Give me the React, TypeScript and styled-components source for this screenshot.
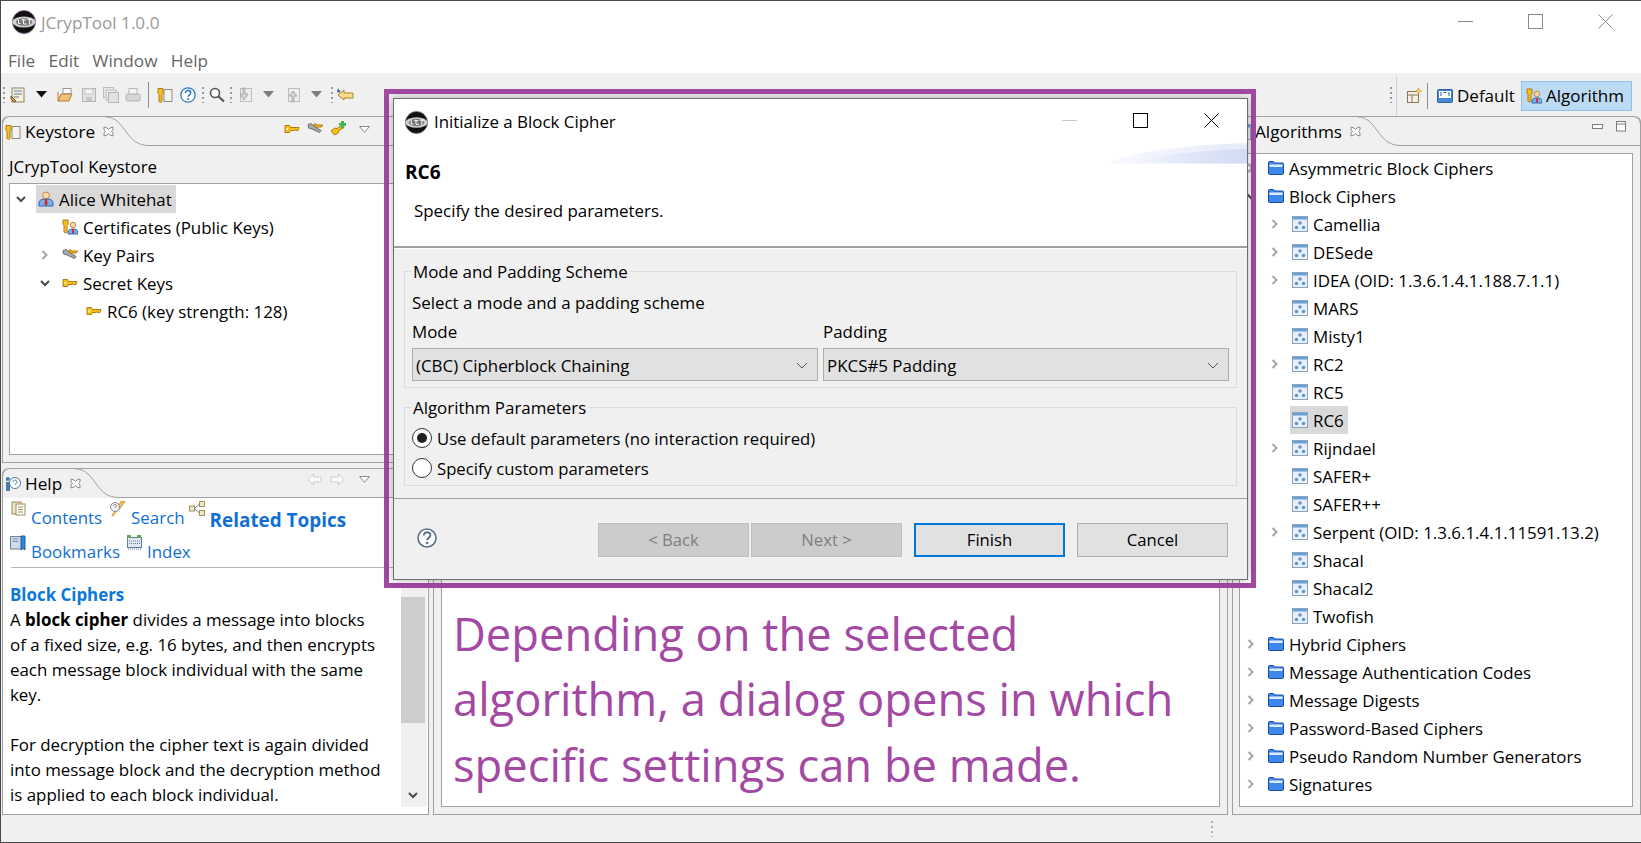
import React from "react";
import styled, { createGlobalStyle } from "styled-components";

const Global = createGlobalStyle`
  html, body { margin: 0; padding: 0; background: #f0f0f0; overflow: hidden; }
  body { font-family: "Open Sans", "Noto Sans", "Liberation Sans", sans-serif; font-size: 16.9px; color: #000; }
  * { box-sizing: border-box; }
`;

const Win = styled.div`
  position: relative; width: 1641px; height: 843px; display: flex; flex-direction: column;
  border-top: 1px solid #4a4a4a; border-left: 1px solid #4a4a4a; border-bottom: 1px solid #4a4a4a;
  background: #f0f0f0; overflow: hidden;
`;
const TitleBar = styled.div`
  height: 47px; background: #fff; display: flex; align-items: center; padding: 0 1px 6px 11px;
  color: #999; font-size: 17.1px;
`;
const TitleText = styled.span`margin: 3px 0 0 5px; line-height: 24px;`;
const TitleSpacer = styled.div`flex: 1;`;
const WinBtn = styled.div`width: 70px; display: flex; justify-content: center; align-items: center;`;
const MenuBar = styled.div`
  height: 25px; background: #fff; display: flex; padding: 0 0 0 7px; gap: 13.4px; align-items: center; color: #666; font-size: 17.2px;
`;
const Toolbar = styled.div`
  height: 43px; display: flex; align-items: center; padding: 0 9px 0 2px; background: #f0f0f0;
`;
const TI = styled.span<{ $ml?: number }>`
  display: inline-flex; align-items: center; margin-left: ${(p) => p.$ml ?? 0}px; flex: none;
`;
const Grip = styled.span<{ $ml?: number }>`
  width: 2px; height: 16px; margin-left: ${(p) => p.$ml ?? 0}px; flex: none;
  background: repeating-linear-gradient(to bottom, #9a9a9a 0 2px, transparent 2px 5px);
`;
const Sep = styled.span<{ $ml?: number }>`
  width: 1px; height: 26px; background: #8f8f8f; margin-left: ${(p) => p.$ml ?? 0}px; flex: none;
`;
const TbSpacer = styled.div`flex: 1;`;
const PerspBar = styled.div`
  display: flex; align-items: center; height: 38px; margin-top: 2px; border-left: 1px solid #d0d0d0; padding-left: 9px; margin-left: 4px;
`;
const PerspBtn = styled.div<{ $on?: boolean }>`
  display: flex; align-items: center; gap: 4px; height: 30px; flex: none; white-space: nowrap;
  font-size: 17px; width: ${(p) => (p.$on ? 111 : 87)}px; padding-left: ${(p) => (p.$on ? 4 : 3)}px; margin-left: ${(p) => (p.$on ? 1 : 5)}px;
  background: ${(p) => (p.$on ? "#bcdaf2" : "transparent")};
  border: 1px solid ${(p) => (p.$on ? "#8fc3ee" : "transparent")};
`;
const Bench = styled.div`
  height: 699px; display: flex; gap: 4px; padding-left: 1px; padding-right: 0;
`;
const LeftCol = styled.div`width: 427px; display: flex; flex-direction: column; gap: 5px; flex: none;`;
const Panel = styled.section<{ $h?: number; $w?: number }>`
  display: flex; flex-direction: column; flex: none; min-height: 0;
  ${(p) => (p.$h ? `height: ${p.$h}px;` : "")}
  ${(p) => (p.$w ? `width: ${p.$w}px;` : "")}
  border: 1px solid #a0a0a0; border-top: none; border-radius: 6px 6px 0 0;
`;
const TabStrip = styled.div`
  height: 30px; flex: none; display: flex; margin: 0 -1px;
  border-top: 1px solid #a0a0a0; border-left: 1px solid #a0a0a0; border-right: 1px solid #a0a0a0; border-radius: 8px 8px 0 0;
`;
const Tab = styled.div<{ $w: number }>`
  width: ${(p) => p.$w}px; flex: none; display: flex; align-items: center; gap: 4px; padding: 0 0 0 2px; font-size: 17.2px; white-space: nowrap;
  & > svg { flex: none; }
`;
const CloseX = styled.span`display: inline-flex; margin-left: 4px; margin-top: -1px; flex: none;`;
const TabFill = styled.div`
  flex: 1; border-bottom: 1px solid #a0a0a0; display: flex; align-items: flex-start; justify-content: flex-end; padding-top: 4px;
`;
const ViewTools = styled.div<{ $pr?: number }>`display: flex; align-items: center; gap: 7px; padding-right: ${(p) => p.$pr ?? 8}px;`;
const KeyBody = styled.div`flex: 1; display: flex; flex-direction: column; padding: 0 7px 7px 6px; min-height: 0;`;
const KeyTitle = styled.div`height: 37px; display: flex; align-items: center; padding: 3px 0 0 0; font-size: 16.9px;`;
const TreeBox = styled.div<{ $pad?: number }>`
  flex: 1; background: #fff; border: 1px solid #a0a0a0; padding-top: ${(p) => p.$pad ?? 1}px; overflow: hidden; min-height: 0;
`;
const Row = styled.div<{ $level: number }>`
  height: 28px; display: flex; align-items: center; padding-left: ${(p) => 3 + p.$level * 24}px;
`;
const Chev = styled.span`width: 16px; height: 16px; flex: none; display: inline-flex; margin-right: 7px;`;
const Label = styled.span<{ $sel?: boolean }>`
  display: inline-flex; align-items: center; gap: 5px; height: 28px; padding: 0 4px 0 2px; white-space: nowrap;
  font-size: 16.9px; background: ${(p) => (p.$sel ? "#d9d9d9" : "transparent")};
`;
const HelpBody = styled.div`flex: 1; background: #fff; display: flex; flex-direction: column; min-height: 0;`;
const LinkBox = styled.div`height: 70px; flex: none; padding: 3px 0 0 7px; margin-left: 8px; border-bottom: 1px solid #b4b4b4;`;
const LinkRow = styled.div`height: 34px; display: flex; align-items: flex-start; margin-left: -5px;`;
const HLink = styled.span<{ $ml?: number; $bold?: boolean }>`
  display: inline-flex; align-items: flex-start; gap: 5px; margin-left: ${(p) => p.$ml ?? 0}px; white-space: nowrap;
  color: #0f6fd6; font-size: ${(p) => (p.$bold ? 18.9 : 16.9)}px; font-weight: ${(p) => (p.$bold ? 700 : 400)};
  & > b { font-weight: inherit; margin-top: ${(p) => (p.$bold ? 9 : 7)}px; line-height: 20px; }
  & > svg { flex: none; }
`;
const HelpMain = styled.div`flex: 1; display: flex; min-height: 0;`;
const HelpText = styled.div`flex: 1; padding: 14px 0 0 7px; min-width: 0;`;
const HelpHead = styled.div`color: #0b78d8; font-weight: 700; font-size: 16.9px; line-height: 25px;`;
const HelpLine = styled.div<{ $gap?: boolean }>`line-height: 25px; height: 25px; white-space: nowrap; font-size: 16.9px; ${(p) => (p.$gap ? "margin-top: 25px;" : "")}`;
const Bold = styled.strong`font-weight: 700;`;
const Scroll = styled.div`
  width: 26px; flex: none; margin: 16px 1px 7px 0; background: #f0f0f0; display: flex; flex-direction: column; align-items: center; padding-right: 2px;
`;
const ScrollThumb = styled.div`width: 24px; height: 126px; margin-top: 13px; background: #cdcdcd; flex: none;`;
const ScrollEnd = styled.div`margin-top: auto; height: 24px; display: flex; align-items: center;`;
const EditorBody = styled.div`flex: 1; display: flex; padding: 0 7px 7px 7px; margin-top: -30px; min-height: 0;`;
const EditorPage = styled.div`
  flex: 1; background: #fff; border: 1px solid #a0a0a0; display: flex; flex-direction: column; justify-content: flex-end; padding: 0 0 9px 11px;
`;
const Big = styled.div`color: #a349a4; font-size: 45.3px; line-height: 65.5px; white-space: nowrap;`;
const RightBody = styled.div`flex: 1; display: flex; padding: 7px 7px 7px 6px; min-height: 0;`;
const StatusBar = styled.div`flex: 1; display: flex; align-items: center; padding-left: 1210px;`;
const StatusGrip = styled.span`width: 2px; height: 16px; background: repeating-linear-gradient(to bottom, #b0b0b0 0 2px, transparent 2px 5px);`;

const Frame = styled.div`
  position: absolute; left: 383px; top: 88px; width: 872px; height: 499px;
  border: 5px solid #a349a4; padding: 4px 3px 3px 4px; display: flex;
`;
const Dialog = styled.div`
  flex: 1; display: flex; flex-direction: column; background: #f0f0f0; border: 1px solid #6e6e6e;
  box-shadow: 0 0 10px rgba(0,0,0,.28);
`;
const DHeader = styled.div`
  position: relative; height: 149px; flex: none; background: #fff; border-bottom: 2px solid #a0a0a0; box-shadow: 0 1px 0 #fff;
  display: flex; flex-direction: column; overflow: hidden;
`;
const DTitle = styled.div`height: 46px; display: flex; align-items: center; padding: 0 0 0 11px; font-size: 16.9px;`;
const DTitleText = styled.span`margin: -2px 0 0 6px;`;
const DCtl = styled.div`width: 71px; display: flex; justify-content: center; align-items: center; margin-top: -3px;`;
const DHead = styled.div`font-weight: 700; font-size: 19px; padding: 16px 0 0 11px; line-height: 22px;`;
const DSub = styled.div`padding: 17px 0 0 20px; line-height: 22px; font-size: 16.9px;`;
const Swoosh = styled.svg`position: absolute; right: 0; top: 44px;`;
const DBody = styled.div`flex: 1; display: flex; flex-direction: column; padding: 13px 10px 0 10px; gap: 9px; min-height: 0;`;
const Group = styled.fieldset<{ $h: number }>`
  margin: 0; padding: 0 7px; height: ${(p) => p.$h}px; border: 1px solid #dcdcdc; flex: none; min-width: 0; display: block;
`;
const Legend = styled.legend`padding: 1px 2px 0; margin-left: -1px; font-size: 16.9px; line-height: 20px;`;
const GLine = styled.div<{ $mt: number }>`line-height: 22px; font-size: 16.9px; margin-top: ${(p) => p.$mt}px;`;
const Cols = styled.div`display: grid; grid-template-columns: 406px 406px; column-gap: 5px;`;
const Combo = styled.div`
  height: 33px; background: #e1e1e1; border: 1px solid #adadad; display: flex; align-items: center; justify-content: space-between;
  padding: 2px 8px 0 3px; margin-top: 5px; font-size: 16.9px;
`;
const RadioList = styled.div`margin-top: 5px;`;
const Radio = styled.div`display: flex; align-items: center; height: 30px; gap: 5px; font-size: 16.7px;`;
const RadioDot = styled.span<{ $on?: boolean }>`
  width: 20px; height: 20px; border-radius: 50%; border: 1px solid #333; background: #fff; flex: none; display: flex; align-items: center; justify-content: center;
  &::after { content: ""; width: 10px; height: 10px; border-radius: 50%; background: ${(p) => (p.$on ? "#222" : "transparent")}; }
`;
const DFoot = styled.div`
  height: 81px; flex: none; border-top: 1px solid #a0a0a0; display: flex; align-items: flex-start; padding: 24px 19px 0 23px;
`;
const HelpQ = styled.span`margin-right: auto; display: inline-flex; margin-top: 5px;`;
const Btn = styled.div<{ $kind?: "off" | "def" }>`
  width: 151px; height: 34px; flex: none; display: flex; align-items: center; justify-content: center; font-size: 16.7px; padding-bottom: 2px;
  margin-left: ${(p) => (p.$kind === "off" ? 2 : 12)}px;
  background: ${(p) => (p.$kind === "off" ? "#cccccc" : "#e1e1e1")};
  color: ${(p) => (p.$kind === "off" ? "#7e7e7e" : "#000")};
  border: ${(p) => (p.$kind === "def" ? "2px solid #0078d7" : p.$kind === "off" ? "1px solid #bfbfbf" : "1px solid #adadad")};
`;

type IP = { s?: number };
const Logo = ({ s = 24 }: IP) => (
  <svg width={s} height={s} viewBox="0 0 24 24" style={{ flex: "none" }}>
    <circle cx="12" cy="12" r="11.5" fill="#111" stroke="#8a6a90" strokeWidth="0.8" />
    <ellipse cx="12" cy="12" rx="11.5" ry="5.6" fill="#cfcfcf" />
    <ellipse cx="12" cy="12" rx="8" ry="3.8" fill="#777" />
    <path d="M6.5 9.5v4h2M11 10h3M15.5 9.5h4M17.5 9.5v5M9.5 10c2-1 2 0 2 0v4h3" fill="none" stroke="#fff" strokeWidth="1" />
  </svg>
);
const Key = ({ s = 16 }: IP) => (
  <svg width={s} height={s} viewBox="0 0 16 16" style={{ flex: "none" }}>
    <path d="M1 4.500h4.500l1 2H15l-1 3H12l-1-.8-1 .8H6.500l-1 2H1z" fill="#f4c01e" stroke="#b27a12" strokeWidth="1" />
    <rect x="2.500" y="7" width="1.400" height="2" fill="#fff6c8" />
  </svg>
);
const GrayKey = ({ s = 16 }: IP) => (
  <svg width={s} height={s} viewBox="0 0 16 16" style={{ flex: "none" }}>
    <path d="M1 3.500l3-1 3 2.500 7 4.500-1.500 2-7.500-3.500L1.500 7z" fill="#a8a8a8" stroke="#6d6d6d" />
    <path d="M7 3h2l1 1h5.500l-1 2H9.500L8 5.500z" fill="#f4c01e" stroke="#b27a12" />
  </svg>
);
const GreenKey = ({ s = 16 }: IP) => (
  <svg width={s} height={s} viewBox="0 0 16 16" style={{ flex: "none" }}>
    <path d="M1 10l4-3 2 .5 5-3 2 2-5 3-1 2.500-3.500 2z" fill="#f4c01e" stroke="#b27a12" />
    <path d="M11 0h3v2h2v3h-2.500v2H11V4.500H9V2h2z" fill="#3fb54f" />
  </svg>
);
const VKey = ({ s = 16 }: IP) => (
  <svg width={s} height={s} viewBox="0 0 16 16" style={{ flex: "none" }}>
    <rect x="7" y="2.500" width="8" height="12" fill="#f4f4ee" stroke="#8c8c80" />
    <path d="M1 1.500h5v5L5 7.500v7l-1.500 1-1.500-1v-7l-1-1z" fill="#f4c01e" stroke="#b27a12" />
  </svg>
);
const Person = ({ s = 16 }: IP) => (
  <svg width={s} height={s} viewBox="0 0 16 16" style={{ flex: "none" }}>
    <circle cx="8" cy="4.500" r="3.500" fill="#f3d7a8" stroke="#c28d4a" />
    <path d="M1 15v-3c0-3 2.500-4 7-4s7 1 7 4v3z" fill="#79aeea" stroke="#2d68b5" />
    <path d="M7 8h2l.5 5-1.500 2-1.500-2z" fill="#d22" />
  </svg>
);
const Certs = ({ s = 16 }: IP) => (
  <svg width={s} height={s} viewBox="0 0 16 16" style={{ flex: "none" }}>
    <path d="M1 1h5v4.500L5 6.500v6.500L3.500 14 2 13V6.500L1 5.500z" fill="#f4c01e" stroke="#b27a12" />
    <circle cx="11" cy="6" r="2.800" fill="#f3d7a8" stroke="#c28d4a" />
    <path d="M6 15v-2c0-2 2-3 5-3s5 1 5 3v2z" fill="#79aeea" stroke="#2d68b5" />
    <path d="M10.300 10h1.400l.3 3.500-1 1.500-1-1.500z" fill="#d22" />
  </svg>
);
const Folder = ({ s = 16 }: IP) => (
  <svg width={s} height={s} viewBox="0 0 16 16" style={{ flex: "none" }}>
    <path d="M.5 2.500q0-1 1-1h4l1.500 1.500h7.500q1 0 1 1v9.500q0 1-1 1h-13q-1 0-1-1z" fill="#3f86ea" stroke="#1c4ca8" />
    <rect x="1.500" y="4.500" width="13" height="2.500" fill="#dceafc" />
  </svg>
);
const Algo = ({ s = 16 }: IP) => (
  <svg width={s} height={s} viewBox="0 0 16 16" style={{ flex: "none" }}>
    <rect x=".5" y=".5" width="15" height="15" fill="#e9eff8" stroke="#8da3be" />
    <rect x="1" y="1" width="14" height="2.500" fill="#6a9ed6" />
    <circle cx="8" cy="7" r="1.700" fill="#5f93cf" />
    <circle cx="4.500" cy="11.500" r="1.700" fill="#5f93cf" />
    <circle cx="11.500" cy="11.500" r="1.700" fill="#5f93cf" />
  </svg>
);
const ChevR = () => (
  <svg width="16" height="16" viewBox="0 0 16 16"><path d="M5.500 4l4 4-4 4" fill="none" stroke="#a6a6a6" strokeWidth="2" /></svg>
);
const ChevD = () => (
  <svg width="16" height="16" viewBox="0 0 16 16"><path d="M4 6l4 4 4-4" fill="none" stroke="#4a4a4a" strokeWidth="2" /></svg>
);
const Tri = ({ fill = "#7d7d7d" }: { fill?: string }) => (
  <svg width="11" height="7" viewBox="0 0 11 7"><path d="M0 0h11L5.500 6.500z" fill={fill} /></svg>
);
const TriOpen = () => (
  <svg width="11" height="7" viewBox="0 0 11 7"><path d="M.5 .5h10L5.500 6.300z" fill="#fff" stroke="#8a8a8a" /></svg>
);
const X = ({ c, s = 15 }: { c: string; s?: number }) => (
  <svg width={s} height={s} viewBox="0 0 15 15"><path d="M.5 .5l14 14M14.500 .5l-14 14" stroke={c} strokeWidth="1" fill="none" /></svg>
);
const Mx = ({ c, s = 15 }: { c: string; s?: number }) => (
  <svg width={s} height={s} viewBox="0 0 15 15"><rect x=".5" y=".5" width="14" height="14" stroke={c} fill="none" /></svg>
);
const Mn = ({ c }: { c: string }) => (
  <svg width="15" height="15" viewBox="0 0 15 15"><path d="M0 7.500h15" stroke={c} /></svg>
);
const TabX = () => (
  <svg width="11" height="11" viewBox="0 0 11 11"><path d="M1 1l3 1 1.500 1.500L7 2l3-1 0 3-1.500 1.500L10 7v3l-3-1-1.500-1.500L4 9l-3 1V7l1.500-1.500L1 4z" fill="#fff" stroke="#8a8a8a" /></svg>
);
const Curve = () => (
  <svg width="42" height="29" viewBox="0 0 42 29" style={{ flex: "none", display: "block" }}>
    <path d="M0 0c10 0 15 8 21 16c6 8 11 12 21 12.500" fill="none" stroke="#a0a0a0" />
  </svg>
);
const NewDoc = () => (
  <svg width="16" height="16" viewBox="0 0 16 16"><rect x="2" y="1" width="12" height="14" fill="#f6efd8" stroke="#8f8468" /><path d="M4 4h8M4 7h8M4 10h5" stroke="#5a7cab" /><path d="M1 9l5 5-2 1-3-3z" fill="#c9a45a" stroke="#7a5e2a" /></svg>
);
const OpenF = () => (
  <svg width="16" height="16" viewBox="0 0 16 16"><path d="M1 5V14h11l3-7H4L1 14" fill="#f3c27a" stroke="#b57d2b" /><rect x="6" y="1.500" width="8" height="5" fill="#fff" stroke="#999" /></svg>
);
const SaveG = () => (
  <svg width="16" height="16" viewBox="0 0 16 16"><rect x="1.500" y="1.500" width="13" height="13" fill="#e2e2e2" stroke="#b5b5b5" /><rect x="4" y="2" width="8" height="5" fill="#f6f6f6" stroke="#c5c5c5" /><rect x="5" y="10" width="6" height="4" fill="#c8c8c8" /></svg>
);
const SaveAll = () => (
  <svg width="16" height="16" viewBox="0 0 16 16"><rect x=".5" y=".5" width="10" height="10" fill="#eaeaea" stroke="#bdbdbd" /><rect x="3" y="3" width="10" height="10" fill="#eaeaea" stroke="#bdbdbd" /><rect x="5.500" y="5.500" width="10" height="10" fill="#e2e2e2" stroke="#b5b5b5" /></svg>
);
const Print = () => (
  <svg width="16" height="16" viewBox="0 0 16 16"><rect x="4" y="1.500" width="8" height="6" fill="#f4f4f4" stroke="#b9b9b9" /><rect x="1" y="7" width="14" height="7" rx="1.500" fill="#d6d6d6" stroke="#b0b0b0" /></svg>
);
const QHelp = ({ c = "#2d7ac0", s = 16 }: { c?: string; s?: number }) => (
  <svg width={s} height={s} viewBox="0 0 20 20"><circle cx="10" cy="10" r="9" fill="#fff" stroke={c} strokeWidth="1.600" /><path d="M6.800 7.500c0-4.500 6.600-4.200 6.600-.2 0 2.500-3.200 2.400-3.200 5" fill="none" stroke={c} strokeWidth="1.900" /><circle cx="10.200" cy="15" r="1.300" fill={c} /></svg>
);
const Search = () => (
  <svg width="16" height="16" viewBox="0 0 16 16"><circle cx="6" cy="6" r="4.500" fill="#fff" stroke="#555" strokeWidth="1.600" /><path d="M9.500 9.500l5.500 5" stroke="#555" strokeWidth="2.200" /></svg>
);
const DocArrow = ({ up }: { up?: boolean }) => (
  <svg width="16" height="16" viewBox="0 0 16 16"><rect x="3.500" y="1.500" width="11" height="13" fill="#eeeeee" stroke="#bdbdbd" /><path d={up ? "M7 15V9H4l4-5 4 5H9v6z" : "M6 1v6H3l4 6 4-6H8V1z"} fill="#d4d4d4" stroke="#a9a9a9" /></svg>
);
const BackKey = () => (
  <svg width="17" height="16" viewBox="0 0 17 16"><path d="M1 8l6-5v3h9v5H7v2z" fill="#f9dc8a" stroke="#a8842c" /><path d="M1 1l1 2 2 0-1.500 1L3 6 1 5l-1 .5" fill="#2a5aa5" /></svg>
);
const NewPersp = () => (
  <svg width="16" height="16" viewBox="0 0 16 16" style={{ flex: "none" }}><rect x="1.500" y="3.500" width="11" height="11" fill="#f4efdf" stroke="#85795a" /><path d="M1.500 7h11M6 7v7.500" stroke="#85795a" /><path d="M12.500 0l1 2 2 1-2 1-1 2-1-2-2-1 2-1z" fill="#f4d35e" stroke="#b5902b" strokeWidth=".5" /></svg>
);
const Persp = () => (
  <svg width="16" height="16" viewBox="0 0 16 16" style={{ flex: "none" }}><rect x=".5" y="1.500" width="15" height="13" rx="1" fill="#4a88cf" stroke="#2b5f9e" /><rect x="2" y="3" width="12" height="7" fill="#fff" /><path d="M4 4v4M7 4.500h2M7 4v1M12 4v4" stroke="#2b5f9e" /></svg>
);
const HelpTabI = () => (
  <svg width="16" height="16" viewBox="0 0 16 16"><circle cx="2.800" cy="3" r="2" fill="#4b79a8" /><path d="M1 6h4v9H1z" fill="#4b79a8" /><circle cx="10" cy="7" r="5.500" fill="#fff" stroke="#4b79a8" /><path d="M8 6c0-2.500 4-2.500 4 0 0 1.500-2 1.500-2 3" fill="none" stroke="#4b79a8" /></svg>
);
const ArrowOut = ({ flip }: { flip?: boolean }) => (
  <svg width="15" height="13" viewBox="0 0 15 13" style={flip ? { transform: "scaleX(-1)" } : undefined}><path d="M.8 6.500L6.500 1v3h7.500v5H6.500v3z" fill="#fafafa" stroke="#cccccc" /></svg>
);
const Books = () => (
  <svg width="15" height="15" viewBox="0 0 15 15"><rect x="1" y="1" width="9" height="12" fill="#efe5c5" stroke="#9c8c5a" /><rect x="5" y="3" width="9" height="11" fill="#fff" stroke="#9c8c5a" /><path d="M7 6h5M7 8.500h5M7 11h5" stroke="#9c8c5a" /></svg>
);
const SearchH = () => (
  <svg width="17" height="17" viewBox="0 0 17 17"><path d="M8 9L3 15M10 8l5-7-3 0-4 6" stroke="#e0ac4c" strokeWidth="2" fill="none" /><circle cx="6" cy="6" r="4.500" fill="#f4f4f4" stroke="#888" /><path d="M4.500 5c0-2 3-2 3 0 0 1-1.500 1-1.500 2" stroke="#777" fill="none" /></svg>
);
const Related = () => (
  <svg width="16" height="15" viewBox="0 0 16 15"><rect x=".5" y="5" width="5" height="5" fill="#efe5c5" stroke="#a3925e" /><rect x="10.500" y=".5" width="5" height="5" fill="#efe5c5" stroke="#a3925e" /><rect x="10.500" y="9.500" width="5" height="5" fill="#efe5c5" stroke="#a3925e" /><path d="M5.500 7.500l5-4.500M5.500 7.500l5 4.500" stroke="#6f7f95" /></svg>
);
const Book = () => (
  <svg width="16" height="16" viewBox="0 0 16 16"><path d="M.5 1.500h11V14H.5z" fill="#cfdcec" stroke="#6c7f96" /><path d="M11 1h4v14l-2-1.500L11 15z" fill="#2d86d6" stroke="#1f5f9f" /><path d="M2.500 4h6M2.500 6.500h6" stroke="#7d8ea3" /></svg>
);
const IndexI = () => (
  <svg width="15" height="15" viewBox="0 0 15 15"><rect x=".5" y="2.500" width="14" height="10" fill="#dfe8f2" stroke="#5e7fa3" /><rect x="0" y="0" width="4" height="3" fill="#6aa15b" /><rect x="10" y="0" width="4" height="3" fill="#6aa15b" /><path d="M2 6h11M2 8.500h11" stroke="#5e7fa3" strokeDasharray="1 1" /><path d="M1 14h13" stroke="#5e7fa3" strokeDasharray="1 1" /></svg>
);
const SmallMin = () => (
  <svg width="11" height="6" viewBox="0 0 11 6"><rect x=".5" y=".5" width="10" height="4" fill="#fff" stroke="#7d7d7d" /></svg>
);
const SmallMax = () => (
  <svg width="11" height="11" viewBox="0 0 11 11"><rect x=".5" y=".5" width="9" height="9.500" fill="#fff" stroke="#7d7d7d" /><path d="M.5 3h9" stroke="#7d7d7d" /></svg>
);
const ComboArrow = () => (
  <svg width="14" height="8" viewBox="0 0 14 8"><path d="M2 1l5 5 5-5" stroke="#555" fill="none" /></svg>
);

type TR = { t: string; l: number; c?: "r" | "d"; i: React.ReactNode; sel?: boolean };
const TreeRow = ({ t, l, c, i, sel }: TR) => (
  <Row $level={l}>
    <Chev>{c === "r" ? <ChevR /> : c === "d" ? <ChevD /> : null}</Chev>
    <Label $sel={sel}>{i}<span>{t}</span></Label>
  </Row>
);

const keyRows: TR[] = [
  { t: "Alice Whitehat", l: 0, c: "d", i: <Person />, sel: true },
  { t: "Certificates (Public Keys)", l: 1, i: <Certs /> },
  { t: "Key Pairs", l: 1, c: "r", i: <GrayKey /> },
  { t: "Secret Keys", l: 1, c: "d", i: <Key /> },
  { t: "RC6 (key strength: 128)", l: 2, i: <Key /> },
];
const algoNames: [string, boolean, boolean?][] = [
  ["Camellia", true], ["DESede", true], ["IDEA (OID: 1.3.6.1.4.1.188.7.1.1)", true], ["MARS", false], ["Misty1", false],
  ["RC2", true], ["RC5", false], ["RC6", false, true], ["Rijndael", true], ["SAFER+", false], ["SAFER++", false],
  ["Serpent (OID: 1.3.6.1.4.1.11591.13.2)", true], ["Shacal", false], ["Shacal2", false], ["Twofish", false],
];
const topAfter = ["Hybrid Ciphers", "Message Authentication Codes", "Message Digests", "Password-Based Ciphers", "Pseudo Random Number Generators", "Signatures"];

export default function App() {
  return (
    <>
      <Global />
      <Win>
        <TitleBar>
          <Logo />
          <TitleText>JCrypTool 1.0.0</TitleText>
          <TitleSpacer />
          <WinBtn><Mn c="#8a8a8a" /></WinBtn>
          <WinBtn><Mx c="#8a8a8a" /></WinBtn>
          <WinBtn><X c="#8a8a8a" /></WinBtn>
        </TitleBar>
        <MenuBar><span>File</span><span>Edit</span><span>Window</span><span>Help</span></MenuBar>
        <Toolbar>
          <Grip />
          <TI $ml={5}><NewDoc /></TI>
          <TI $ml={10}><Tri fill="#111" /></TI>
          <TI $ml={10}><OpenF /></TI>
          <TI $ml={8}><SaveG /></TI>
          <TI $ml={6}><SaveAll /></TI>
          <TI $ml={6}><Print /></TI>
          <Sep $ml={7} />
          <TI $ml={8}><VKey /></TI>
          <TI $ml={7}><QHelp /></TI>
          <Grip $ml={6} />
          <TI $ml={5}><Search /></TI>
          <Grip $ml={5} />
          <TI $ml={5}><DocArrow /></TI>
          <TI $ml={10}><Tri /></TI>
          <TI $ml={11}><DocArrow up /></TI>
          <TI $ml={10}><Tri /></TI>
          <Grip $ml={9} />
          <TI $ml={4}><BackKey /></TI>
          <TbSpacer />
          <Grip />
          <PerspBar>
            <NewPersp />
            <Sep $ml={5} />
            <PerspBtn><Persp /><span>Default</span></PerspBtn>
            <PerspBtn $on><Certs /><span>Algorithm</span></PerspBtn>
          </PerspBar>
        </Toolbar>
        <Bench>
          <LeftCol>
            <Panel $h={347}>
              <TabStrip>
                <Tab $w={103}><VKey /><span>Keystore</span><CloseX><TabX /></CloseX></Tab>
                <Curve />
                <TabFill>
                  <ViewTools $pr={58}>
                    <Key /><GrayKey /><GreenKey />
                    <TI $ml={6}><TriOpen /></TI>
                  </ViewTools>
                </TabFill>
              </TabStrip>
              <KeyBody>
                <KeyTitle>JCrypTool Keystore</KeyTitle>
                <TreeBox>
                  {keyRows.map((r) => <TreeRow key={r.t} {...r} />)}
                </TreeBox>
              </KeyBody>
            </Panel>
            <Panel $h={347}>
              <TabStrip>
                <Tab $w={73}><HelpTabI /><span>Help</span><CloseX><TabX /></CloseX></Tab>
                <Curve />
                <TabFill>
                  <ViewTools $pr={58}>
                    <ArrowOut /><TI $ml={1}><ArrowOut flip /></TI>
                    <TI $ml={7}><TriOpen /></TI>
                  </ViewTools>
                </TabFill>
              </TabStrip>
              <HelpBody>
                <LinkBox>
                  <LinkRow>
                    <HLink $ml={-2}><Books /><b>Contents</b></HLink>
                    <HLink $ml={7}><SearchH /><b>Search</b></HLink>
                    <HLink $ml={4} $bold><Related /><b>Related Topics</b></HLink>
                  </LinkRow>
                  <LinkRow>
                    <HLink $ml={-3}><Book /><b>Bookmarks</b></HLink>
                    <HLink $ml={7}><IndexI /><b>Index</b></HLink>
                  </LinkRow>
                </LinkBox>
                <HelpMain>
                  <HelpText>
                    <HelpHead>Block Ciphers</HelpHead>
                    <HelpLine>A <Bold>block cipher</Bold> divides a message into blocks</HelpLine>
                    <HelpLine>of a fixed size, e.g. 16 bytes, and then encrypts</HelpLine>
                    <HelpLine>each message block individual with the same</HelpLine>
                    <HelpLine>key.</HelpLine>
                    <HelpLine $gap>For decryption the cipher text is again divided</HelpLine>
                    <HelpLine>into message block and the decryption method</HelpLine>
                    <HelpLine>is applied to each block individual.</HelpLine>
                  </HelpText>
                  <Scroll>
                    <ScrollThumb />
                    <ScrollEnd><ChevD /></ScrollEnd>
                  </Scroll>
                </HelpMain>
              </HelpBody>
            </Panel>
          </LeftCol>
          <Panel $w={795}>
            <TabStrip />
            <EditorBody>
              <EditorPage>
                <Big>Depending on the selected</Big>
                <Big>algorithm, a dialog opens in which</Big>
                <Big>specific settings can be made.</Big>
              </EditorPage>
            </EditorBody>
          </Panel>
          <Panel $w={409}>
            <TabStrip>
              <Tab $w={125}><Algo /><span>Algorithms</span><CloseX><TabX /></CloseX></Tab>
              <Curve />
              <TabFill>
                <ViewTools $pr={13}>
                  <SmallMin /><TI $ml={6}><SmallMax /></TI>
                </ViewTools>
              </TabFill>
            </TabStrip>
            <RightBody>
              <TreeBox $pad={0}>
                <TreeRow t="Asymmetric Block Ciphers" l={0} c="r" i={<Folder />} />
                <TreeRow t="Block Ciphers" l={0} c="d" i={<Folder />} />
                {algoNames.map(([n, c, s]) => (
                  <TreeRow key={n} t={n} l={1} c={c ? "r" : undefined} sel={s} i={<Algo />} />
                ))}
                {topAfter.map((n) => <TreeRow key={n} t={n} l={0} c="r" i={<Folder />} />)}
              </TreeBox>
            </RightBody>
          </Panel>
        </Bench>
        <StatusBar><StatusGrip /></StatusBar>

        <Frame>
          <Dialog>
            <DHeader>
              <Swoosh width="141" height="21" viewBox="0 0 141 21">
                <defs>
                  <linearGradient id="sw" x1="0" x2="1" y1="0" y2="0">
                    <stop offset="0" stopColor="#f8f9fe" />
                    <stop offset="1" stopColor="#e6ebfa" />
                  </linearGradient>
                  <linearGradient id="sw2" x1="0" x2="1" y1="0" y2="0">
                    <stop offset="0" stopColor="#d3dcf4" stopOpacity="0" />
                    <stop offset="1" stopColor="#d3dcf4" />
                  </linearGradient>
                </defs>
                <path d="M0 20.500C30 8 80 2 141 0V20.500z" fill="url(#sw)" />
                <path d="M30 20.500C60 10 100 7 141 6V20.500z" fill="url(#sw2)" />
              </Swoosh>
              <DTitle>
                <Logo s={23} />
                <DTitleText>Initialize a Block Cipher</DTitleText>
                <TitleSpacer />
                <DCtl><Mn c="#c8c8c8" /></DCtl>
                <DCtl><Mx c="#000" /></DCtl>
                <DCtl><X c="#000" /></DCtl>
              </DTitle>
              <DHead>RC6</DHead>
              <DSub>Specify the desired parameters.</DSub>
            </DHeader>
            <DBody>
              <Group $h={127}>
                <Legend>Mode and Padding Scheme</Legend>
                <GLine $mt={10}>Select a mode and a padding scheme</GLine>
                <Cols>
                  <div>
                    <GLine $mt={7}>Mode</GLine>
                    <Combo><span>(CBC) Cipherblock Chaining</span><ComboArrow /></Combo>
                  </div>
                  <div>
                    <GLine $mt={7}>Padding</GLine>
                    <Combo><span>PKCS#5 Padding</span><ComboArrow /></Combo>
                  </div>
                </Cols>
              </Group>
              <Group $h={89}>
                <Legend>Algorithm Parameters</Legend>
                <RadioList>
                  <Radio><RadioDot $on /><span>Use default parameters (no interaction required)</span></Radio>
                  <Radio><RadioDot /><span>Specify custom parameters</span></Radio>
                </RadioList>
              </Group>
            </DBody>
            <DFoot>
              <HelpQ><QHelp c="#5c6f8f" s={20} /></HelpQ>
              <Btn $kind="off">&lt; Back</Btn>
              <Btn $kind="off">Next &gt;</Btn>
              <Btn $kind="def">Finish</Btn>
              <Btn>Cancel</Btn>
            </DFoot>
          </Dialog>
        </Frame>
      </Win>
    </>
  );
}
